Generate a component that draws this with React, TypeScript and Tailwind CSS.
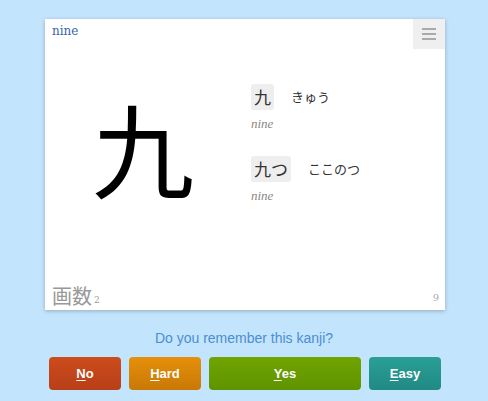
const readings = [
  { kanji: '九', kana: 'きゅう', meaning: 'nine' },
  { kanji: '九つ', kana: 'ここのつ', meaning: 'nine' },
];

const buttons = [
  { key: 'N', rest: 'o', width: 'w-[72px]', bg: 'bg-gradient-to-b from-[#cc4c1c] to-[#b83f18]' },
  { key: 'H', rest: 'ard', width: 'w-[72px]', bg: 'bg-gradient-to-b from-[#e6900a] to-[#c87806]' },
  { key: 'Y', rest: 'es', width: 'w-[152px]', bg: 'bg-gradient-to-b from-[#70a400] to-[#5f9400]' },
  { key: 'E', rest: 'asy', width: 'w-[72px]', bg: 'bg-gradient-to-b from-[#2a9f96] to-[#208a84]' },
];

export default function App() {
  return (
    <div className="w-[488px] h-[401px] bg-[#c3e4fd] pt-[19px] font-['Liberation_Sans',sans-serif]">
      {/* Card */}
      <div className="ml-[45px] w-[400px] h-[291px] bg-white shadow-[0_1px_4px_rgba(0,0,0,0.25)] flex flex-col">
        <div className="flex justify-between h-[30px]">
          <span className="pl-[7px] pt-[3px] text-[12px] text-[#3565b0] font-['DejaVu_Serif',serif]">nine</span>
          <button className="w-[32px] h-[30px] bg-[#efefef] flex flex-col items-center justify-center gap-[3px]">
            <span className="block w-[14px] h-[2px] bg-[#aaa]" />
            <span className="block w-[14px] h-[2px] bg-[#aaa]" />
            <span className="block w-[14px] h-[2px] bg-[#aaa]" />
          </button>
        </div>

        <div className="flex flex-1">
          <div className="w-[196px] flex justify-center pt-[47px]">
            <span className="text-[102px] leading-none text-black font-['Noto_Sans_CJK_JP',sans-serif]">九</span>
          </div>
          <div className="pl-[10px] pt-[35px] flex flex-col gap-[24px]">
            {readings.map((r) => (
              <div key={r.kanji} className="flex flex-col">
                <div className="flex items-center gap-[17px]">
                  <span className="bg-[#eeeeee] rounded-[3px] px-[3px] h-[26px] flex items-center text-[17px] text-[#333] font-['Noto_Sans_CJK_JP',sans-serif]">
                    {r.kanji}
                  </span>
                  <span className="text-[13px] text-[#333] font-['Noto_Sans_CJK_JP',sans-serif]">{r.kana}</span>
                </div>
                <span className="mt-[6px] text-[13px] leading-[16px] italic text-[#888] font-['Liberation_Serif',serif]">
                  {r.meaning}
                </span>
              </div>
            ))}
          </div>
        </div>

        <div className="flex justify-between items-end pl-[7px] pr-[6px] pb-[4px]">
          <div className="flex items-end text-[#999]">
            <span className="text-[20px] leading-none font-['Noto_Sans_CJK_JP',sans-serif]">画数</span>
            <span className="text-[9px] leading-none ml-[2px] mb-[1px] font-['DejaVu_Serif',serif]">2</span>
          </div>
          <span className="text-[10px] leading-none mb-[3px] text-[#aaa] font-['DejaVu_Serif',serif]">9</span>
        </div>
      </div>

      <p className="mt-[20px] text-center text-[14px] leading-[16px] text-[#4a8fd0]">Do you remember this kanji?</p>

      <div className="mt-[11px] flex justify-center gap-[8px] pl-[2px]">
        {buttons.map((b) => (
          <button
            key={b.key}
            className={`${b.width} h-[33px] rounded-[4px] ${b.bg} text-white text-[13px] font-bold`}
          >
            <span className="underline underline-offset-2">{b.key}</span>
            {b.rest}
          </button>
        ))}
      </div>
    </div>
  );
}
